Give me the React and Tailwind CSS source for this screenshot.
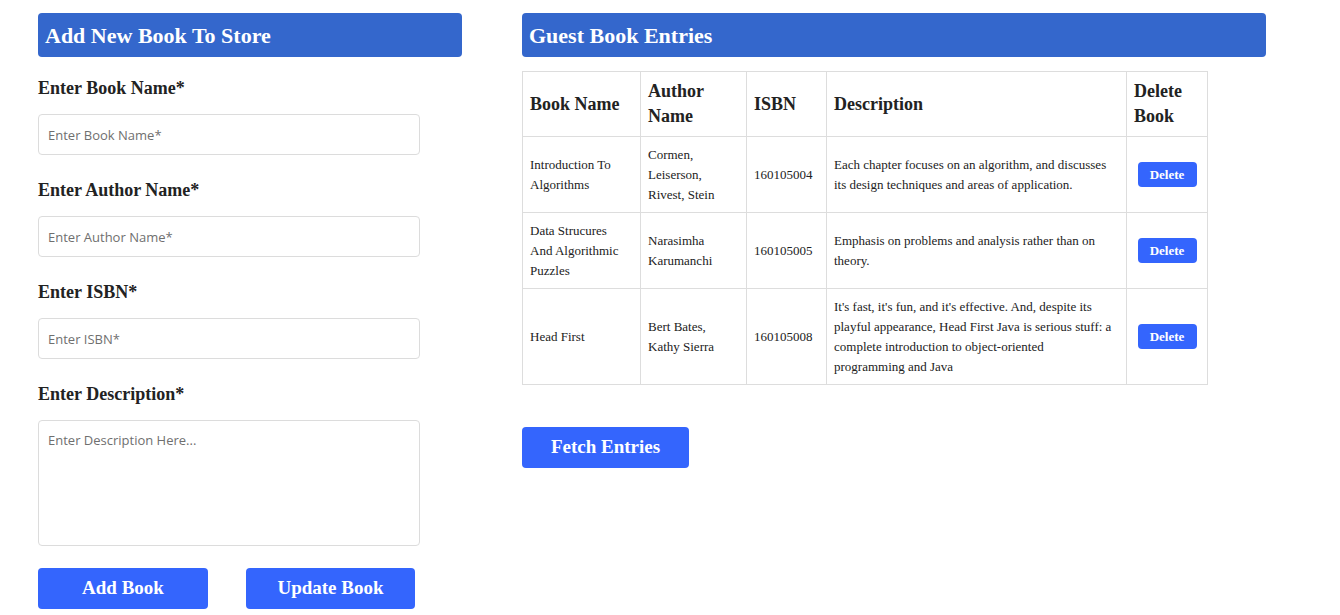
import React from "react";

// lines are kept as in the original layout so cells wrap the same way
const books = [
  {
    name: ["Introduction To", "Algorithms"],
    author: ["Cormen,", "Leiserson,", "Rivest, Stein"],
    isbn: "160105004",
    description: [
      "Each chapter focuses on an algorithm, and discusses",
      "its design techniques and areas of application.",
    ],
  },
  {
    name: ["Data Strucures", "And Algorithmic", "Puzzles"],
    author: ["Narasimha", "Karumanchi"],
    isbn: "160105005",
    description: ["Emphasis on problems and analysis rather than on", "theory."],
  },
  {
    name: ["Head First"],
    author: ["Bert Bates,", "Kathy Sierra"],
    isbn: "160105008",
    description: [
      "It's fast, it's fun, and it's effective. And, despite its",
      "playful appearance, Head First Java is serious stuff: a",
      "complete introduction to object-oriented",
      "programming and Java",
    ],
  },
];

const serif = "font-['Liberation_Serif',serif]";
const sans = "font-['Open_Sans',sans-serif]";

const Lines = ({ lines }) =>
  lines.map((l, i) => (
    <span key={i} className="block">
      {l}
    </span>
  ));

const Field = ({ label, placeholder }) => (
  <div className="flex flex-col">
    <label className={`${serif} text-[18px] font-bold leading-[24px] text-[#222]`}>{label}</label>
    <input
      placeholder={placeholder}
      className={`${sans} mt-[14px] mb-[23px] h-[41px] w-[382px] rounded-[4px] border border-[#dcdcdc] px-[9px] text-[13px] text-[#333] placeholder:text-[#6f6f6f] outline-none`}
    />
  </div>
);

const App = () => {
  return (
    <div className="flex gap-[60px] bg-white pl-[38px] pt-[13px] min-h-[615px]">
      {/* Add book form */}
      <div className="w-[424px] flex flex-col">
        <h2 className={`${serif} h-[44px] rounded-[4px] bg-[#3467cc] px-[7px] text-[22px] font-bold leading-[46px] text-white`}>
          Add New Book To Store
        </h2>
        <div className="mt-[19px] flex flex-col">
          <Field label="Enter Book Name*" placeholder="Enter Book Name*" />
          <Field label="Enter Author Name*" placeholder="Enter Author Name*" />
          <Field label="Enter ISBN*" placeholder="Enter ISBN*" />
          <label className={`${serif} text-[18px] font-bold leading-[24px] text-[#222]`}>Enter Description*</label>
          <textarea
            placeholder="Enter Description Here..."
            className={`${sans} mt-[14px] h-[126px] w-[382px] resize-none rounded-[4px] border border-[#dcdcdc] px-[9px] py-[10px] text-[13px] placeholder:text-[#6f6f6f] outline-none`}
          />
          <div className="mt-[22px] flex gap-[38px]">
            <button className={`${serif} h-[41px] w-[170px] rounded-[4px] bg-[#3465fd] text-[19px] font-bold text-white`}>
              Add Book
            </button>
            <button className={`${serif} h-[41px] w-[169px] rounded-[4px] bg-[#3465fd] text-[19px] font-bold text-white`}>
              Update Book
            </button>
          </div>
        </div>
      </div>

      {/* Entries table */}
      <div className="w-[744px] flex flex-col">
        <h2 className={`${serif} h-[44px] rounded-[4px] bg-[#3467cc] px-[7px] text-[22px] font-bold leading-[46px] text-white`}>
          Guest Book Entries
        </h2>
        <table className={`${serif} mt-[14px] w-[685px] table-fixed border-collapse text-[#222]`}>
          <colgroup>
            <col className="w-[118px]" />
            <col className="w-[106px]" />
            <col className="w-[80px]" />
            <col className="w-[300px]" />
            <col className="w-[81px]" />
          </colgroup>
          <thead>
            <tr className="text-left text-[18px] font-bold leading-[25px]">
              <th className="border border-[#ddd] px-[7px] py-[7px] align-middle">Book Name</th>
              <th className="border border-[#ddd] px-[7px] py-[7px] align-middle">Author Name</th>
              <th className="border border-[#ddd] px-[7px] py-[7px] align-middle">ISBN</th>
              <th className="border border-[#ddd] px-[7px] py-[7px] align-middle">Description</th>
              <th className="border border-[#ddd] px-[7px] py-[7px] align-middle">Delete Book</th>
            </tr>
          </thead>
          <tbody className="text-[13px] leading-[20px]">
            {books.map((b) => (
              <tr key={b.isbn}>
                <td className="border border-[#ddd] px-[7px] py-[7.5px] align-middle whitespace-nowrap">
                  <Lines lines={b.name} />
                </td>
                <td className="border border-[#ddd] px-[7px] py-[7.5px] align-middle whitespace-nowrap">
                  <Lines lines={b.author} />
                </td>
                <td className="border border-[#ddd] px-[7px] py-[7.5px] align-middle">{b.isbn}</td>
                <td className="border border-[#ddd] px-[7px] py-[7.5px] align-middle whitespace-nowrap">
                  <Lines lines={b.description} />
                </td>
                <td className="border border-[#ddd] px-[7px] py-[7.5px] align-middle text-center">
                  <button className="h-[25px] w-[59px] rounded-[4px] bg-[#3465fd] text-[13px] font-bold text-white">
                    Delete
                  </button>
                </td>
              </tr>
            ))}
          </tbody>
        </table>
        <div className="mt-[42px]">
          <button className={`${serif} h-[41px] w-[167px] rounded-[4px] bg-[#3465fd] text-[19px] font-bold text-white`}>
            Fetch Entries
          </button>
        </div>
      </div>
    </div>
  );
};

export default App;
